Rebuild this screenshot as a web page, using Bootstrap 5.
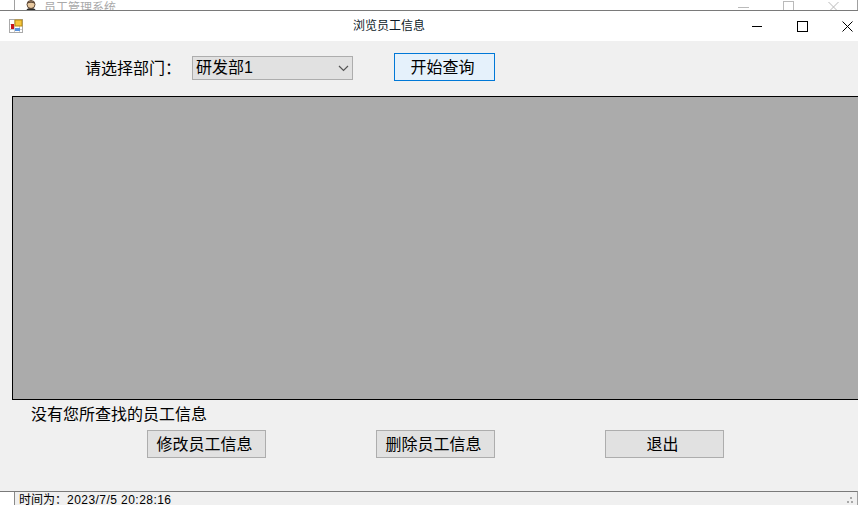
<!DOCTYPE html>
<html lang="zh">
<head>
<meta charset="utf-8">
<title>浏览员工信息</title>
<link href="https://cdn.jsdelivr.net/npm/bootstrap@5.3.0/dist/css/bootstrap.min.css" rel="stylesheet">
<style>
html,body{height:505px;overflow:hidden;background:#f0f0f0}
body{font-family:"Liberation Sans","Noto Sans CJK SC",sans-serif;font-size:16px;color:#000;line-height:1.2}
.outer-strip{height:11px;background:#fff;border-bottom:1px solid #7a7a7a;overflow:hidden;padding-left:14px}
.outer-inner{height:10px;border-left:1px solid #a0a0a0;border-right:1px solid #a0a0a0;padding-left:10px;overflow:hidden}
.outer-title{font-size:12px;color:#a9a9a9;margin-left:7px;line-height:16px;white-space:nowrap}
.outer-ctrls{margin-left:auto;gap:34px;margin-right:18px;opacity:.5}
.caption{height:30px;background:#fff;padding-left:9px}
.caption-text{font-size:12px;margin-left:330px;color:#0d1a28;line-height:30px}
.caption-ctrls{margin-left:auto;gap:34px;margin-right:5px}
.client{height:450px;background:#f0f0f0;overflow:hidden}
.query-row{height:55px;padding-left:85px}
.dept-label{width:107px;white-space:nowrap;margin-top:18px}
.dept-select{width:161px;height:24px;margin-top:15px;border:1px solid #adadad;background-color:#e1e1e1;border-radius:0;padding:0 0 0 3px;font-size:16px;line-height:22px;font-family:inherit;color:#000;background-position:right 3px center;background-size:11px 7px;background-image:url("data:image/svg+xml,%3Csvg xmlns='http://www.w3.org/2000/svg' viewBox='0 0 11 7'%3E%3Cpath d='M1 1l4.500 4.500L10 1' fill='none' stroke='%23555' stroke-width='1.200'/%3E%3C/svg%3E")}
.win-btn{height:28px;width:119px;border:1px solid #adadad;background:#e1e1e1;border-radius:0;padding:2px 4px 0 0;font-size:16px;line-height:24px;color:#000}
.win-btn:hover{background:#e1e1e1;border-color:#adadad;color:#000}
.win-btn-active{width:101px;margin-left:41px;margin-top:12px;border-color:#0078d7;background:#e5f1fb}
.win-btn-active:hover{background:#e5f1fb;border-color:#0078d7}
.grid-view{height:304px;margin-left:12px;background:#ababab;border:1px solid #000;border-right:0}
.empty-note{padding-left:31px;height:30px;line-height:30px}
.action-row{padding-left:147px;gap:110px}
.status-strip{height:14px;border-top:1px solid #7a7a7a;overflow:hidden;font-size:12px;border-right:1px solid #a0a0a0}
.status-gutter{background:#fff;border-right:1px solid #8a8a8a;width:15px}
.status-text{padding-left:4px;line-height:16px;white-space:nowrap}
.status-time{letter-spacing:.45px}
.grip{margin-left:auto;margin-right:3px;margin-top:5px}
</style>
</head>
<body>
<div class="outer-strip">
  <div class="outer-inner d-flex">
    <svg width="12" height="11" viewBox="0 0 12 11"><path d="M1 12c0-3 2-4 5-4s5 1 5 4z" fill="#2b2b2b"/><circle cx="6" cy="4.500" r="4" fill="#e8c9a0" stroke="#5a4636" stroke-width="1"/><path d="M2.200 3.500C3 .5 9 .5 9.800 3.500 7.500 2.500 4.500 2.500 2.200 3.500z" fill="#5a4636"/></svg>
    <div class="outer-title">员工管理系统</div>
    <div class="outer-ctrls d-flex">
      <svg width="11" height="10" viewBox="0 0 11 10"><path d="M0 7.500h11" stroke="#777" fill="none"/></svg>
      <svg width="11" height="12" viewBox="0 0 11 12"><rect x=".5" y="1.500" width="10" height="10" stroke="#777" fill="none"/></svg>
      <svg width="11" height="12" viewBox="0 0 11 12"><path d="M.5 2l10 10M10.500 2l-10 10" stroke="#777" fill="none"/></svg>
    </div>
  </div>
</div>
<div class="caption d-flex align-items-center">
  <svg width="14" height="14" viewBox="0 0 14 14"><rect x=".5" y=".5" width="13" height="13" fill="#fff" stroke="#aaa"/><path d="M1 5.500h12M1 10.500h12M5.500 1v12M10.500 1v12" stroke="#ccc"/><rect x="2" y="5" width="3" height="5" fill="#c8141c"/><rect x="6" y="1" width="7" height="6" fill="#f5c63c" stroke="#b98a10"/><rect x="6" y="9" width="5" height="3" fill="#5a94e0"/></svg>
  <div class="caption-text">浏览员工信息</div>
  <div class="caption-ctrls d-flex align-items-center">
    <svg width="11" height="11" viewBox="0 0 11 11"><path d="M0 5.500h10" stroke="#000" fill="none"/></svg>
    <svg width="11" height="11" viewBox="0 0 11 11"><rect x=".5" y=".5" width="10" height="10" stroke="#000" fill="none"/></svg>
    <svg width="11" height="11" viewBox="0 0 11 11"><path d="M.5.500l10 10M10.500.500l-10 10" stroke="#000" fill="none"/></svg>
  </div>
</div>
<main class="client">
  <div class="query-row d-flex align-items-start">
    <label class="dept-label" for="dept">请选择部门：</label>
    <select id="dept" class="form-select dept-select"><option>研发部1</option></select>
    <button type="button" class="btn win-btn win-btn-active">开始查询</button>
  </div>
  <div class="grid-view"></div>
  <div class="empty-note">没有您所查找的员工信息</div>
  <div class="action-row d-flex">
    <button type="button" class="btn win-btn">修改员工信息</button>
    <button type="button" class="btn win-btn">删除员工信息</button>
    <button type="button" class="btn win-btn">退出</button>
  </div>
</main>
<footer class="status-strip d-flex">
  <div class="status-gutter"></div>
  <div class="status-text">时间为：<span class="status-time">2023/7/5 20:28:16</span></div>
  <svg class="grip" width="7" height="7" viewBox="0 0 7 7"><path d="M3 0h2v2H3zM0 4h2v2H0zM4 4h2v2H4z" fill="#a8a8a8"/></svg>
</footer>
<script src="https://cdn.jsdelivr.net/npm/bootstrap@5.3.0/dist/js/bootstrap.bundle.min.js"></script>
</body>
</html>
